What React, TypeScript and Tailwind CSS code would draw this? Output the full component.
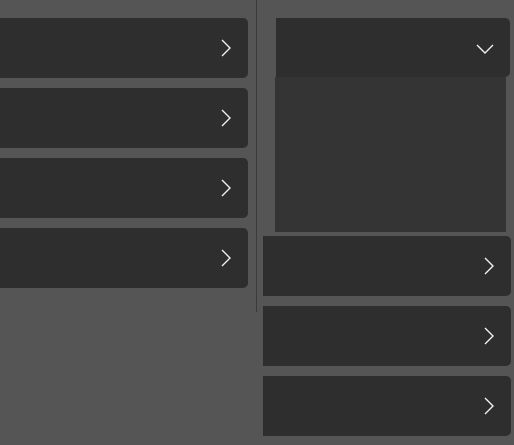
function ChevronR() {
  return (
    <svg width="10" height="18" viewBox="0 0 10 18" fill="none" className="text-[#f2f2f2]">
      <polyline points="1,1 9,9 1,17" stroke="currentColor" strokeWidth="1.4" />
    </svg>
  )
}

function ChevronD() {
  return (
    <svg width="18" height="10" viewBox="0 0 18 10" fill="none" className="text-[#f2f2f2]">
      <polyline points="1,1 9,9 17,1" stroke="currentColor" strokeWidth="1.4" />
    </svg>
  )
}

function Row() {
  return (
    <div className="flex h-[60px] items-center justify-end rounded-r-[5px] bg-[#2e2e2e] pr-[17px]">
      <ChevronR />
    </div>
  )
}

export default function App() {
  return (
    <div className="flex h-[445px] w-[514px] overflow-hidden bg-[#555555]">
      <div className="flex w-[248px] flex-col gap-[10px] pt-[18px]">
        <Row />
        <Row />
        <Row />
        <Row />
      </div>
      <div className="ml-[8px] h-[312px] w-px bg-[#3b3b3b]" />
      <div className="ml-[6px] flex w-[248px] flex-col pt-[18px]">
        <div className="ml-[13px] flex h-[59px] w-[234px] items-center justify-end rounded-r-[5px] bg-[#2e2e2e] pr-[16px] pt-[2px]">
          <ChevronD />
        </div>
        <div className="ml-[12px] h-[155px] w-[231px] bg-[#343434]" />
        <div className="mt-[4px] flex flex-col gap-[10px]">
          <Row />
          <Row />
          <Row />
        </div>
      </div>
    </div>
  )
}
